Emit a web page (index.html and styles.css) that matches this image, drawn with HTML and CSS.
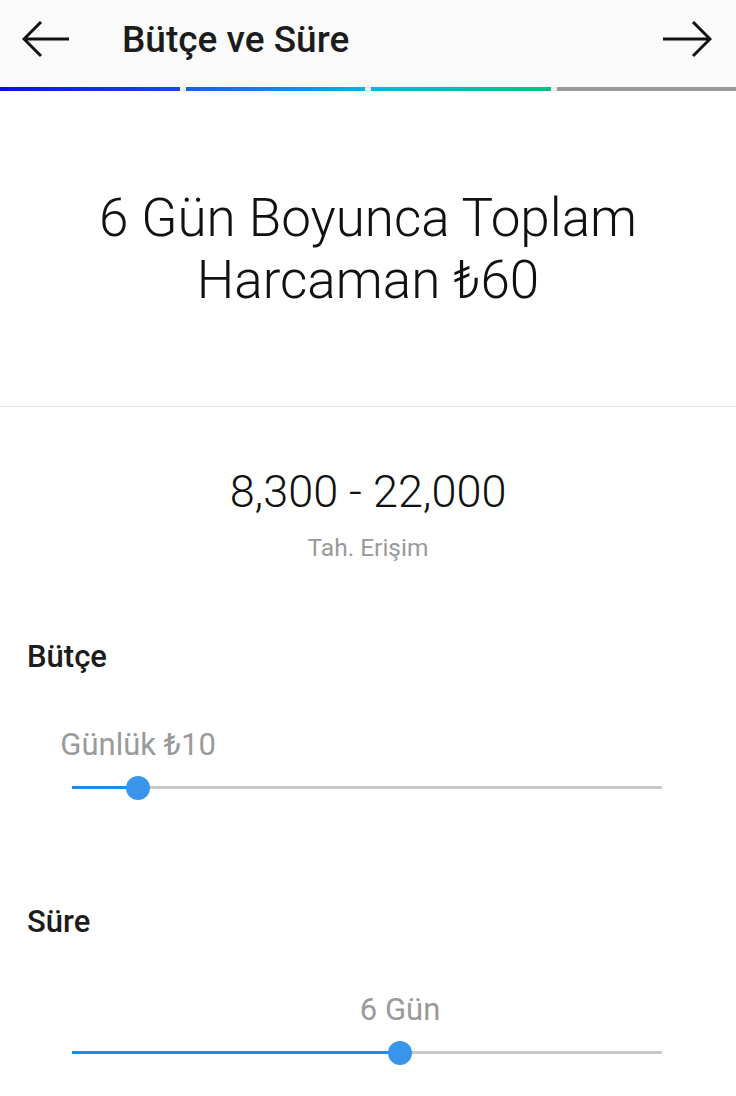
FILE: index.html
```html
<!DOCTYPE html>
<html lang="tr">
<head>
<meta charset="UTF-8">
<title>Bütçe ve Süre</title>
<link rel="stylesheet" href="styles.css">
</head>
<body>
	<!-- 상단 바 -->
	<div class="topbar">
		<svg class="arrow" width="48" height="40" viewBox="0 0 48 40">
			<path d="M47 18H3M19 1L2 18l17 17" fill="none" stroke="#111" stroke-width="3"/>
		</svg>
		<div class="title">Bütçe ve Süre</div>
		<svg class="arrow next" width="50" height="40" viewBox="0 0 50 40">
			<path d="M1 18h46M31 1l17 17-17 17" fill="none" stroke="#111" stroke-width="3"/>
		</svg>
	</div>

	<!-- 단계 표시 -->
	<div class="steps">
		<div class="step s1"></div>
		<div class="step s2"></div>
		<div class="step s3"></div>
		<div class="step s4"></div>
	</div>

	<div class="summary">6 Gün Boyunca Toplam<br>Harcaman ₺60</div>

	<div class="reach">
		<div class="reach-num">8,300 - 22,000</div>
		<div class="reach-label">Tah. Erişim</div>
	</div>

	<div class="field">
		<div class="field-name">Bütçe</div>
		<div class="slider">
			<div class="slider-value"><span style="left:11.2%">Günlük ₺10</span></div>
			<div class="track">
				<div class="fill" style="width:11.2%"></div>
				<div class="thumb" style="left:11.2%"></div>
			</div>
		</div>
	</div>

	<div class="field">
		<div class="field-name">Süre</div>
		<div class="slider">
			<div class="slider-value"><span style="left:55.6%">6 Gün</span></div>
			<div class="track">
				<div class="fill" style="width:55.6%"></div>
				<div class="thumb" style="left:55.6%"></div>
			</div>
		</div>
	</div>
</body>
</html>
```

FILE: styles.css
```css
body{margin:0;background:#fff;font-family:Roboto,"Liberation Sans","DejaVu Sans",sans-serif;color:#1a1a1a;}

/* 상단 바 */
.topbar{height:87px;box-sizing:border-box;padding:0 24px 8px 22px;background:#fafafa;display:flex;align-items:center;}
.arrow{display:block;margin-top:2px;}
.title{margin-left:52px;font-size:37px;font-weight:500;color:#1c1c1c;flex:1;}

/* 단계 표시 줄 */
.steps{display:flex;gap:6px;height:4px;background:#eeeeee;}
.step{flex:1;}
.s1{background:linear-gradient(90deg,#0b12d6,#1b48e2);}
.s2{background:linear-gradient(90deg,#1460e6,#0aaef2);}
.s3{background:linear-gradient(90deg,#0bb4e6,#0cc17a);}
.s4{background:#999;}

/* 요약 */
.summary{height:315px;display:flex;align-items:center;justify-content:center;text-align:center;
	font-size:53px;font-weight:300;line-height:62px;color:#111;border-bottom:1px solid #e2e2e2;}

.reach{text-align:center;padding-top:60px;}
.reach-num{font-size:45px;font-weight:300;line-height:50px;color:#111;}
.reach-label{margin-top:17px;font-size:24.5px;line-height:28px;color:#9a9a9a;}

/* 슬라이더 영역 */
.field{padding:0 74px 0 27px;}
.field-name{font-size:31px;font-weight:500;line-height:34px;margin-top:78px;color:#1c1c1c;}
.field + .field .field-name{margin-top:105px;}
.slider{margin-left:45px;}
.slider-value{position:relative;height:32px;margin-top:55px;}
.slider-value span{position:absolute;top:0;transform:translateX(-50%);white-space:nowrap;
	font-size:31px;line-height:32px;color:#9a9a9a;}
.track{position:relative;height:24px;margin-top:15px;}
.track:before{content:"";position:absolute;left:0;right:0;top:10px;height:3px;background:#c9c9c9;}
.fill{position:absolute;left:0;top:10px;height:3px;background:#1b8ef3;}
.thumb{position:absolute;top:0;width:24px;height:24px;margin-left:-12px;border-radius:50%;background:#3995ec;}
```
